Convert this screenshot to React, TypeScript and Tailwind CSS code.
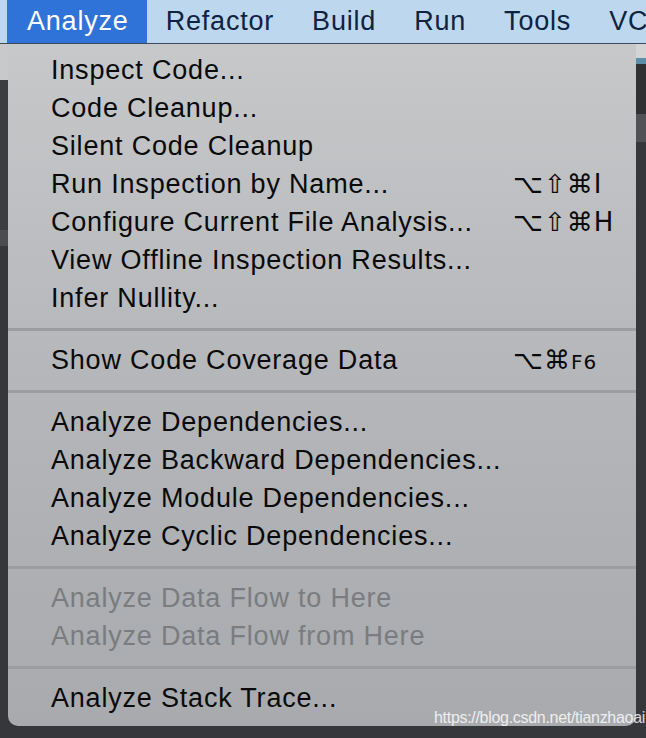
import React from "react";

type Item = { label: string; shortcut?: React.ReactNode; disabled?: boolean };

const groups: Item[][] = [
  [
    { label: "Inspect Code..." },
    { label: "Code Cleanup..." },
    { label: "Silent Code Cleanup" },
    { label: "Run Inspection by Name...", shortcut: <>⌥⇧⌘I</> },
    { label: "Configure Current File Analysis...", shortcut: <>⌥⇧⌘H</> },
    { label: "View Offline Inspection Results..." },
    { label: "Infer Nullity..." },
  ],
  [
    {
      label: "Show Code Coverage Data",
      shortcut: (
        <>
          ⌥⌘<span className="text-[20px]">F6</span>
        </>
      ),
    },
  ],
  [
    { label: "Analyze Dependencies..." },
    { label: "Analyze Backward Dependencies..." },
    { label: "Analyze Module Dependencies..." },
    { label: "Analyze Cyclic Dependencies..." },
  ],
  [
    { label: "Analyze Data Flow to Here", disabled: true },
    { label: "Analyze Data Flow from Here", disabled: true },
  ],
  [{ label: "Analyze Stack Trace..." }],
];

const menus = ["Analyze", "Refactor", "Build", "Run", "Tools", "VC"];

export default function App() {
  return (
    <div
      className="relative w-[646px] h-[738px] overflow-hidden bg-[#35373a]"
      style={{ fontFamily: '"Liberation Sans", "DejaVu Sans", sans-serif' }}
    >
      {/* top menu bar */}
      <div className="flex h-[44px] items-center bg-[#bdd7ef] border-b border-[#3a4a5c] pl-[7px] text-[27px] tracking-[0.8px] text-[#0e2340]">
        {menus.map((m, i) => (
          <div
            key={m}
            className={
              i === 0
                ? "flex h-full items-center bg-[#2f73d8] pl-[20px] pr-[18px] text-white"
                : "flex h-full items-center px-[19px]"
            }
          >
            {m}
          </div>
        ))}
      </div>

      <div className="flex">
        {/* bits of the window behind */}
        <div className="w-[8px] flex flex-col">
          <div className="h-[36px] bg-[#c9c9c9]" />
          <div className="h-[150px] bg-[#3b3d40]" />
          <div className="h-[16px] bg-[#4a4c4f]" />
        </div>

        {/* dropdown */}
        <div className="w-[628px] rounded-b-[10px] bg-gradient-to-b from-[#c6c8ca] via-[#b4b6b9] to-[#a8aaad] pt-[7px] pb-[9px] text-[27px] tracking-[0.8px] text-[#0a0a0a]">
          {groups.map((g, gi) => (
            <div key={gi}>
              {gi > 0 && (
                <div className="flex h-[24px] items-center">
                  <div className="h-[3px] w-full bg-[#9b9da0]" />
                </div>
              )}
              {g.map((it) => (
                <div
                  key={it.label}
                  className={
                    "flex h-[38px] items-center pl-[43px] " +
                    (it.disabled ? "text-[#7a7c80]" : "")
                  }
                >
                  <span className="w-[462px] shrink-0 whitespace-nowrap">{it.label}</span>
                  {it.shortcut && (
                    <span
                      className="text-[26px] tracking-[1px]"
                      style={{ fontFamily: '"DejaVu Sans", sans-serif' }}
                    >
                      {it.shortcut}
                    </span>
                  )}
                </div>
              ))}
            </div>
          ))}
        </div>

        <div className="w-[10px] flex flex-col">
          <div className="h-[14px] bg-[#d4d4d4]" />
          <div className="h-[6px] bg-[#5c8ea8]" />
          <div className="h-[50px] bg-[#2f3133]" />
          <div className="h-[28px] bg-[#505255]" />
        </div>
      </div>

      <div className="absolute right-[1px] top-[706px] text-[16px] tracking-[-0.3px] text-white/80">
        https://blog.csdn.net/tianzhaoai
      </div>
    </div>
  );
}
